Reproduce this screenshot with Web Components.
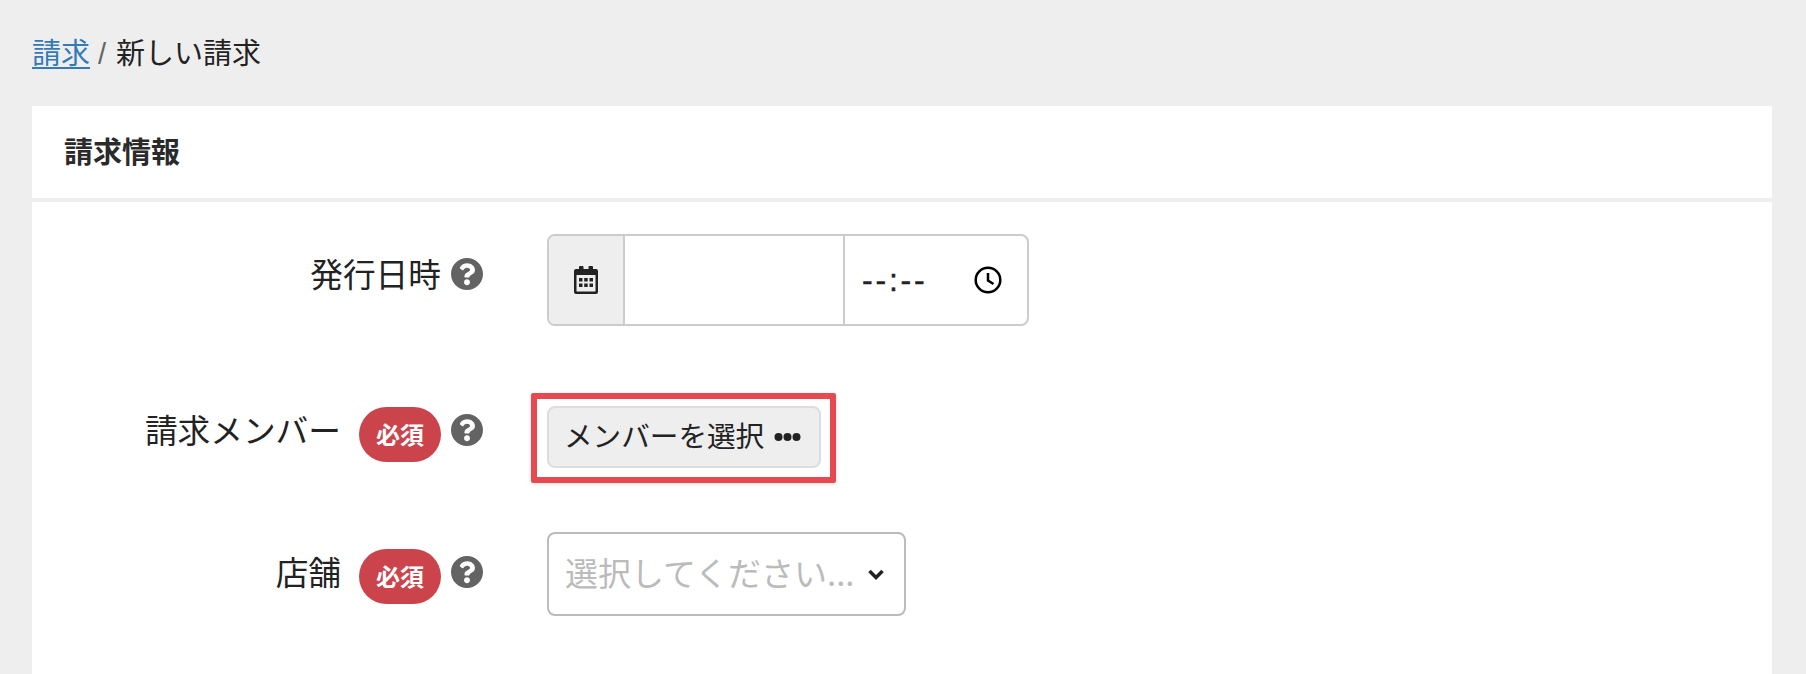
<!DOCTYPE html>
<html lang="ja">
<head>
<meta charset="utf-8">
<title>新しい請求</title>
<style>
  html, body { margin: 0; height: 100%; }
  body {
    background: #eeeeee;
    color: #222;
    font-family: "Noto Sans CJK JP", "Liberation Sans", sans-serif;
    overflow: hidden;
  }
</style>
</head>
<body>
<app-page>
  <bread-crumb slot="crumb"><a href="#">請求</a><span class="sep">/</span>新しい請求</bread-crumb>
  <form-card heading="請求情報">
    <form-row label="発行日時" style="--row-top: 32px; --row-height: 92px; --label-top: 16px">
      <date-time-input></date-time-input>
    </form-row>
    <form-row label="請求メンバー" required style="--row-top: 80px; --row-height: 62px; --label-top: 0px">
      <member-button>メンバーを選択</member-button>
    </form-row>
    <form-row label="店舗" required style="--row-top: 64px; --row-height: 82px; --label-top: 16px">
      <select-box placeholder="選択してください..."></select-box>
    </form-row>
  </form-card>
</app-page>

<script>
  const helpIcon = `<svg width="32" height="32" viewBox="8 8 496 496" fill="#636363"><path d="M504 256c0 136.997-111.043 248-248 248S8 392.997 8 256C8 119.083 119.043 8 256 8s248 111.083 248 248zM262.655 90c-54.497 0-89.255 22.957-116.549 63.758-3.536 5.286-2.353 12.415 2.715 16.258l34.699 26.31c5.205 3.947 12.621 3.008 16.665-2.122 17.864-22.658 30.113-35.797 57.303-35.797 20.429 0 45.698 13.148 45.698 32.958 0 14.976-12.363 22.667-32.534 33.976C247.128 238.528 216 254.941 216 296v4c0 6.627 5.373 12 12 12h56c6.627 0 12-5.373 12-12v-1.333c0-28.462 83.186-29.647 83.186-106.667 0-58.002-60.165-102-116.531-102zM256 338c-25.365 0-46 20.635-46 46 0 25.364 20.635 46 46 46s46-20.636 46-46c0-25.365-20.635-46-46-46z"/></svg>`;

  class AppPage extends HTMLElement {
    constructor() {
      super();
      this.attachShadow({ mode: "open" });
      this.shadowRoot.innerHTML = `
        <style>
          :host { display: block; padding: 0 34px 0 32px; }
          .crumb { height: 106px; }
        </style>
        <div class="crumb"><slot name="crumb"></slot></div>
        <slot></slot>
      `;
    }
  }

  class BreadCrumb extends HTMLElement {
    constructor() {
      super();
      this.attachShadow({ mode: "open" });
      this.shadowRoot.innerHTML = `
        <style>
          :host { display: block; padding-top: 32px; font-size: 29px; line-height: 38px; }
          ::slotted(a) { color: #337ab7; text-decoration: underline; text-decoration-thickness: 2px; text-underline-offset: 3px; }
          ::slotted(.sep) { color: #666; margin: 0 10px 0 8px; font-family: "Liberation Sans", sans-serif; }
        </style>
        <slot></slot>
      `;
    }
  }

  class FormCard extends HTMLElement {
    constructor() {
      super();
      this.attachShadow({ mode: "open" });
      this.shadowRoot.innerHTML = `
        <style>
          :host { display: block; background: #fff; height: 568px; }
          h2 {
            margin: 0;
            height: 92px;
            box-sizing: border-box;
            padding: 25px 0 0 32px;
            font-size: 29px;
            line-height: 38px;
            font-weight: 700;
            color: #2a2a2a;
          }
          .sep { height: 4px; background: #eeeeee; }
        </style>
        <h2>${this.getAttribute("heading")}</h2>
        <div class="sep"></div>
        <slot></slot>
      `;
    }
  }

  class FormRow extends HTMLElement {
    constructor() {
      super();
      this.attachShadow({ mode: "open" });
      const badge = this.hasAttribute("required") ? `<span class="badge">必須</span>` : "";
      this.shadowRoot.innerHTML = `
        <style>
          :host {
            display: grid;
            grid-template-columns: 451px auto;
            column-gap: 64px;
            padding-top: var(--row-top);
            height: var(--row-height);
          }
          .label {
            display: flex;
            justify-content: flex-end;
            align-items: flex-start;
            gap: 10px;
            padding-top: var(--label-top);
          }
          .text { font-size: 32.7px; line-height: 40px; margin-top: 3px; }
          .badge {
            width: 82px;
            height: 55px;
            border-radius: 28px;
            background: #cb444c;
            color: #fff;
            font-size: 24px;
            font-weight: 700;
            line-height: 53px;
            text-align: center;
            margin: 1px 0 0 8px;
          }
          .help { height: 32px; margin-top: 8px; }
          svg { display: block; }
        </style>
        <div class="label">
          <span class="text">${this.getAttribute("label")}</span>${badge}<span class="help">${helpIcon}</span>
        </div>
        <div class="field"><slot></slot></div>
      `;
    }
  }

  class DateTimeInput extends HTMLElement {
    constructor() {
      super();
      this.attachShadow({ mode: "open" });
      this.shadowRoot.innerHTML = `
        <style>
          :host {
            display: flex;
            width: 482px;
            height: 92px;
            box-sizing: border-box;
            border: 2px solid #ccc;
            border-radius: 8px;
            overflow: hidden;
          }
          .addon {
            width: 76px;
            background: #eeeeee;
            border-right: 2px solid #ccc;
            display: flex;
            align-items: center;
            justify-content: center;
            box-sizing: border-box;
          }
          .date { width: 218px; border-right: 2px solid #ccc; }
          .time {
            flex: 1;
            display: flex;
            align-items: center;
            justify-content: space-between;
            padding: 0 25px 0 17px;
            font-family: "Liberation Sans", sans-serif;
            font-size: 32px;
            letter-spacing: 2.8px;
          }
          .time span { padding-top: 1px; -webkit-text-stroke: .4px #222; }
        </style>
        <div class="addon">
          <svg width="24" height="28" viewBox="0 0 24 28">
            <path fill="#222" fill-rule="evenodd" d="M6 0h2.500a1 1 0 0 1 1 1v2h5V1a1 1 0 0 1 1-1H18a1 1 0 0 1 1 1v2h3a2 2 0 0 1 2 2v21a2 2 0 0 1-2 2H2a2 2 0 0 1-2-2V5a2 2 0 0 1 2-2h3V1a1 1 0 0 1 1-1zM2.500 9v16a.5.5 0 0 0 .5.5h18a.5.5 0 0 0 .5-.5V9z"/>
            <path fill="#222" d="M5 12h3.500v3.500H5zM10.200 12h3.500v3.500h-3.500zM15.500 12H19v3.500h-3.500zM5 17.500h3.500V21H5zM10.200 17.500h3.500V21h-3.500zM15.500 17.500H19V21h-3.500z"/>
          </svg>
        </div>
        <div class="date"></div>
        <div class="time">
          <span>--:--</span>
          <svg width="28" height="28" viewBox="0 0 28 28" fill="none" stroke="#000" stroke-width="2.500">
            <circle cx="14" cy="14" r="12.300"/>
            <path d="M14 7v7.500l5.500 3.500"/>
          </svg>
        </div>
      `;
    }
  }

  class MemberButton extends HTMLElement {
    constructor() {
      super();
      this.attachShadow({ mode: "open" });
      this.shadowRoot.innerHTML = `
        <style>
          :host {
            display: inline-flex;
            position: relative;
            align-items: center;
            gap: 10px;
            width: 274px;
            height: 62px;
            box-sizing: border-box;
            padding-left: 15px;
            background: #eeeeee;
            border: 2px solid #ddd;
            border-radius: 8px;
            font-size: 28.6px;
            color: #222;
          }
          .label { display: block; padding-bottom: 4px; line-height: 40px; }
          .mark {
            position: absolute;
            top: -15px;
            left: -18px;
            right: -17px;
            bottom: -17px;
            border: 6px solid #e64a50;
            border-radius: 2px;
            box-shadow: 0 1px 4px rgba(0, 0, 0, .12);
            pointer-events: none;
          }
          svg { display: block; }
        </style>
        <span class="label"><slot></slot></span>
        <svg width="27" height="10" viewBox="0 0 27 10" fill="#222">
          <circle cx="4.500" cy="5" r="4"/><circle cx="13.500" cy="5" r="4"/><circle cx="22.500" cy="5" r="4"/>
        </svg>
        <div class="mark"></div>
      `;
    }
  }

  class SelectBox extends HTMLElement {
    constructor() {
      super();
      this.attachShadow({ mode: "open" });
      this.shadowRoot.innerHTML = `
        <style>
          :host {
            display: flex;
            align-items: center;
            width: 359px;
            height: 84px;
            box-sizing: border-box;
            padding: 0 20px 0 16px;
            border: 2px solid #bbb;
            border-radius: 8px;
            background: #fff;
            justify-content: space-between;
          }
          .value { color: #bbb; font-size: 33px; white-space: nowrap; line-height: 40px; padding-bottom: 4px; }
          svg { display: block; }
        </style>
        <span class="value">${this.getAttribute("placeholder")}</span>
        <svg width="16" height="11" viewBox="0 0 16 11" fill="none" stroke="#222" stroke-width="3.500">
          <path d="M1.500 2l6.500 6.500L14.500 2"/>
        </svg>
      `;
    }
  }

  customElements.define("app-page", AppPage);
  customElements.define("bread-crumb", BreadCrumb);
  customElements.define("form-card", FormCard);
  customElements.define("form-row", FormRow);
  customElements.define("date-time-input", DateTimeInput);
  customElements.define("member-button", MemberButton);
  customElements.define("select-box", SelectBox);
</script>
</body>
</html>
